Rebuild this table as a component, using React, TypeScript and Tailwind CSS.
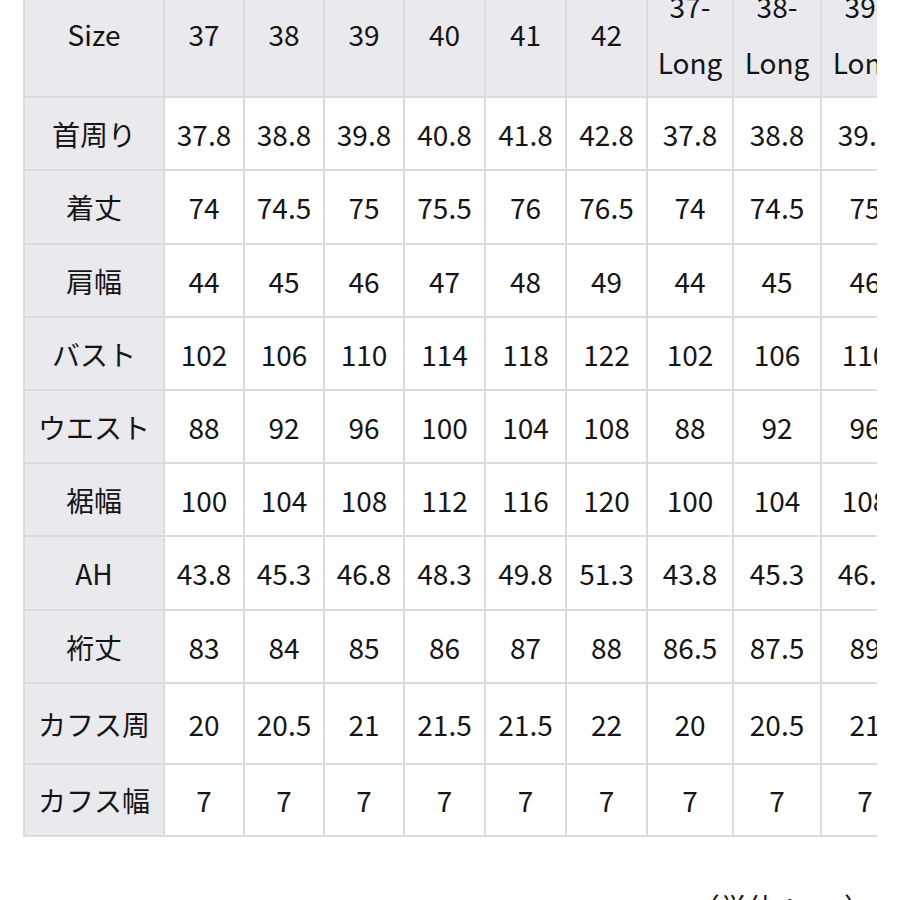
const cols = ["37", "38", "39", "40", "41", "42", "37-Long", "38-Long", "39-Long", "40-Long", "41-Long", "42-Long"];

// width of each cell including its right border
const widths = [140, 80, 80, 80, 81, 81, 81, 86, 88, 88, 88, 88, 88];

const rows: { label: string; h: number; values: string[] }[] = [
  { label: "首周り", h: 73, values: ["37.8", "38.8", "39.8", "40.8", "41.8", "42.8", "37.8", "38.8", "39.8", "40.8", "41.8", "42.8"] },
  { label: "着丈", h: 74, values: ["74", "74.5", "75", "75.5", "76", "76.5", "74", "74.5", "75", "75.5", "76", "76.5"] },
  { label: "肩幅", h: 73, values: ["44", "45", "46", "47", "48", "49", "44", "45", "46", "47", "48", "49"] },
  { label: "バスト", h: 73, values: ["102", "106", "110", "114", "118", "122", "102", "106", "110", "114", "118", "122"] },
  { label: "ウエスト", h: 73, values: ["88", "92", "96", "100", "104", "108", "88", "92", "96", "100", "104", "108"] },
  { label: "裾幅", h: 73, values: ["100", "104", "108", "112", "116", "120", "100", "104", "108", "112", "116", "120"] },
  { label: "AH", h: 74, values: ["43.8", "45.3", "46.8", "48.3", "49.8", "51.3", "43.8", "45.3", "46.8", "48.3", "49.8", "51.3"] },
  { label: "裄丈", h: 73, values: ["83", "84", "85", "86", "87", "88", "86.5", "87.5", "89", "90", "91", "92"] },
  { label: "カフス周", h: 81, values: ["20", "20.5", "21", "21.5", "21.5", "22", "20", "20.5", "21", "21.5", "21.5", "22"] },
  { label: "カフス幅", h: 72, values: ["7", "7", "7", "7", "7", "7", "7", "7", "7", "7", "7", "7"] }
];

export default function App() {
  return (
    <div className="w-[900px] h-[900px] overflow-hidden bg-white text-[#151515] font-['Noto_Sans_CJK_JP','Noto_Sans',sans-serif]">
      <div className="-mt-[28px]">
        <div className="ml-[23px] w-[854px] overflow-hidden border-l-2 border-[#dadadd]">
          <div className="w-max">
            {/* header */}
            <div className="flex h-[126px] border-b-2 border-[#dadadd]">
              {["Size", ...cols].map((c, i) => {
                const parts = c.split("-");
                return (
                  <div
                    key={i}
                    style={{ width: widths[i] }}
                    className="shrink-0 flex flex-col items-center justify-center bg-[#e9e9ee] border-r-2 border-[#dadadd] text-[28px] leading-[56px]"
                  >
                    {parts.length > 1 ? (
                      <>
                        <span>{parts[0]}-</span>
                        <span>{parts[1]}</span>
                      </>
                    ) : (
                      <span>{c}</span>
                    )}
                  </div>
                );
              })}
            </div>

            {rows.map((r) => (
              <div key={r.label} style={{ height: r.h }} className="flex border-b-2 border-[#dadadd]">
                <div
                  style={{ width: widths[0] }}
                  className="shrink-0 flex items-center justify-center bg-[#e9e9ee] border-r-2 border-[#dadadd] text-[28px] whitespace-nowrap"
                >
                  {r.label}
                </div>
                {r.values.map((v, i) => (
                  <div
                    key={i}
                    style={{ width: widths[i + 1] }}
                    className="shrink-0 flex items-center justify-center bg-white border-r-2 border-[#dadadd] text-[28px]"
                  >
                    {v}
                  </div>
                ))}
              </div>
            ))}
          </div>
        </div>
      </div>

      <div className="mt-[50px] flex justify-end pr-[28px] text-[28px] leading-[40px]">
        （単位：cm）
      </div>
    </div>
  );
}
